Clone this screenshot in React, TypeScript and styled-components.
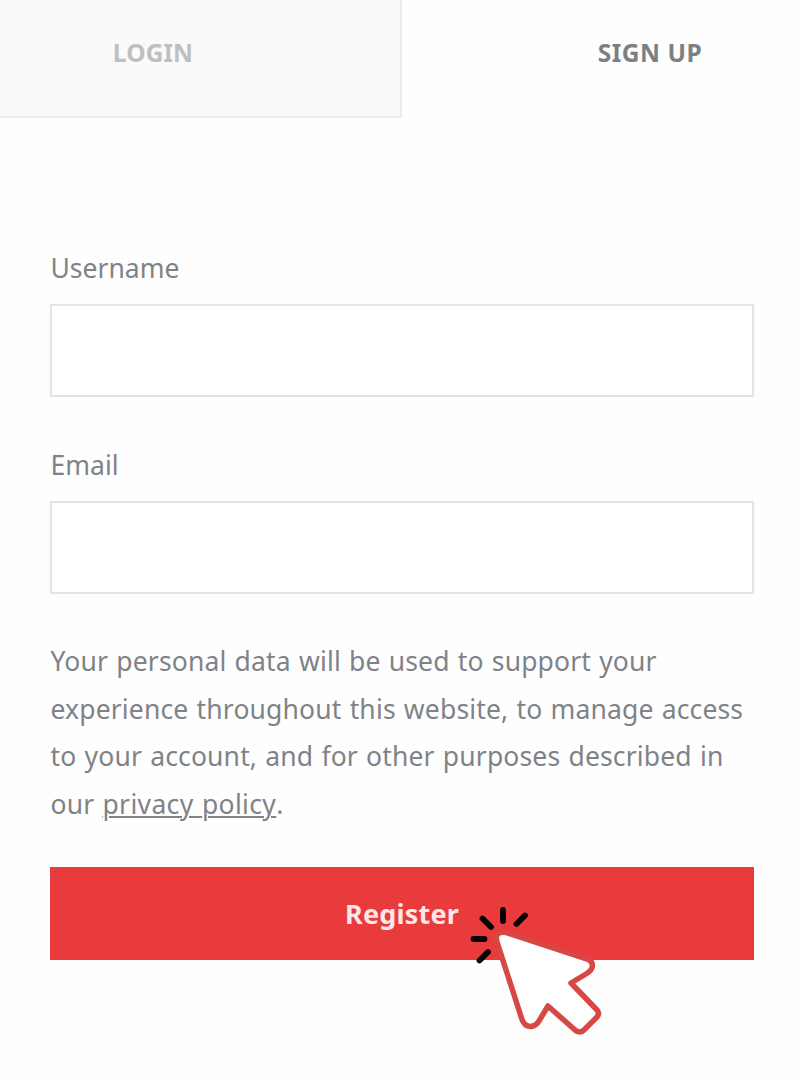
import React from "react";
import styled, { createGlobalStyle } from "styled-components";

const GlobalStyle = createGlobalStyle`
  *, *::before, *::after { box-sizing: border-box; }
  html, body { margin: 0; background: #fefefe; }
  body {
    font-family: "Noto Sans", "Open Sans", sans-serif;
    color: #7e8388;
    overflow: hidden;
  }
`;

const Page = styled.main`
  width: 800px;
  height: 1080px;
  overflow: hidden;
`;

const Tabs = styled.nav`
  display: flex;
  height: 118px;
`;

const Tab = styled.button<{ $active?: boolean }>`
  flex: none;
  width: ${(p) => (p.$active ? 398 : 402)}px;
  height: 118px;
  padding: ${(p) => (p.$active ? "0 0 13px 98px" : "0 94px 11px 0")};
  border: 0 solid #ececed;
  border-width: ${(p) => (p.$active ? "0" : "0 2px 2px 0")};
  background: ${(p) => (p.$active ? "transparent" : "#fafafa")};
  color: ${(p) => (p.$active ? "#7b8085" : "#bdbfc2")};
  font: 700 24.5px/32px "Noto Sans", sans-serif;
  letter-spacing: ${(p) => (p.$active ? 0.5 : 0.1)}px;
`;

const Form = styled.form`
  display: flex;
  flex-direction: column;
  width: 704px;
  margin: 130px 0 0 50px;
`;

const Field = styled.div`
  display: flex;
  flex-direction: column;
  height: 196.5px;
`;

const Label = styled.label`
  height: 56px;
  padding-left: 0.5px;
  font-size: 26.5px;
  line-height: 40px;
`;

const Input = styled.input`
  width: 704px;
  height: 93px;
  padding: 0 24px;
  border: 2px solid #e1e5e8;
  border-radius: 0;
  background: #fff;
  outline: none;
  font: inherit;
  font-size: 26px;
`;

const Notice = styled.p`
  margin: -3px 0 0;
  padding-left: 0.5px;
  height: 229px;
  font-size: 26.5px;
  line-height: 47.7px;
  letter-spacing: 0.15px;
  word-spacing: 1.1px;
`;

const PolicyLink = styled.a`
  color: inherit;
  letter-spacing: 0.35px;
  text-decoration: underline;
  text-decoration-thickness: 2px;
  text-underline-offset: 2px;
`;

const Submit = styled.div`
  position: relative;
  display: flex;
`;

const RegisterButton = styled.button`
  width: 704px;
  height: 93px;
  padding: 0;
  border: 0;
  background: #e93a3c;
  color: #fde6e6;
  font: 700 27px/40px "Noto Sans", sans-serif;
  letter-spacing: 0.2px;
`;

const Pointer = styled.svg`
  position: absolute;
  left: 415px;
  top: 33px;
  overflow: visible;
  pointer-events: none;
`;

export default function App() {
  return (
    <Page>
      <GlobalStyle />
      <Tabs>
        <Tab>LOGIN</Tab>
        <Tab $active>SIGN UP</Tab>
      </Tabs>
      <Form onSubmit={(e) => e.preventDefault()}>
        <Field>
          <Label htmlFor="username">Username</Label>
          <Input id="username" />
        </Field>
        <Field>
          <Label htmlFor="email">Email</Label>
          <Input id="email" />
        </Field>
        <Notice>
          Your personal data will be used to support your experience throughout
          this website, to manage access to your account, and for other purposes
          described in our <PolicyLink>privacy policy</PolicyLink>.
        </Notice>
        <Submit>
          <RegisterButton type="submit">Register</RegisterButton>
          <Pointer width="140" height="140" viewBox="465 900 140 140" fill="none">
            <path
              d="M506 932.5 Q494 931 497 942 L521.5 1018 Q524 1026.5 530.5 1026.5 Q536 1026 539 1021 L548 1006 L575 1030 Q580 1034 584 1030 L597 1017 Q600 1013 597 1010 L571 983 L586 974 Q592 970.5 592.5 966 Q592.5 961 588 959.5 Z"
              fill="#fff"
              stroke="#d64843"
              strokeWidth="5.5"
              strokeLinejoin="round"
            />
            <path
              d="M503 910V921M482.5 918.5L491 927M525 915.5L516.5 924M473.5 939H484.5M488 952L479.5 960.5"
              stroke="#050303"
              strokeWidth="5.8"
              strokeLinecap="round"
            />
          </Pointer>
        </Submit>
      </Form>
    </Page>
  );
}
